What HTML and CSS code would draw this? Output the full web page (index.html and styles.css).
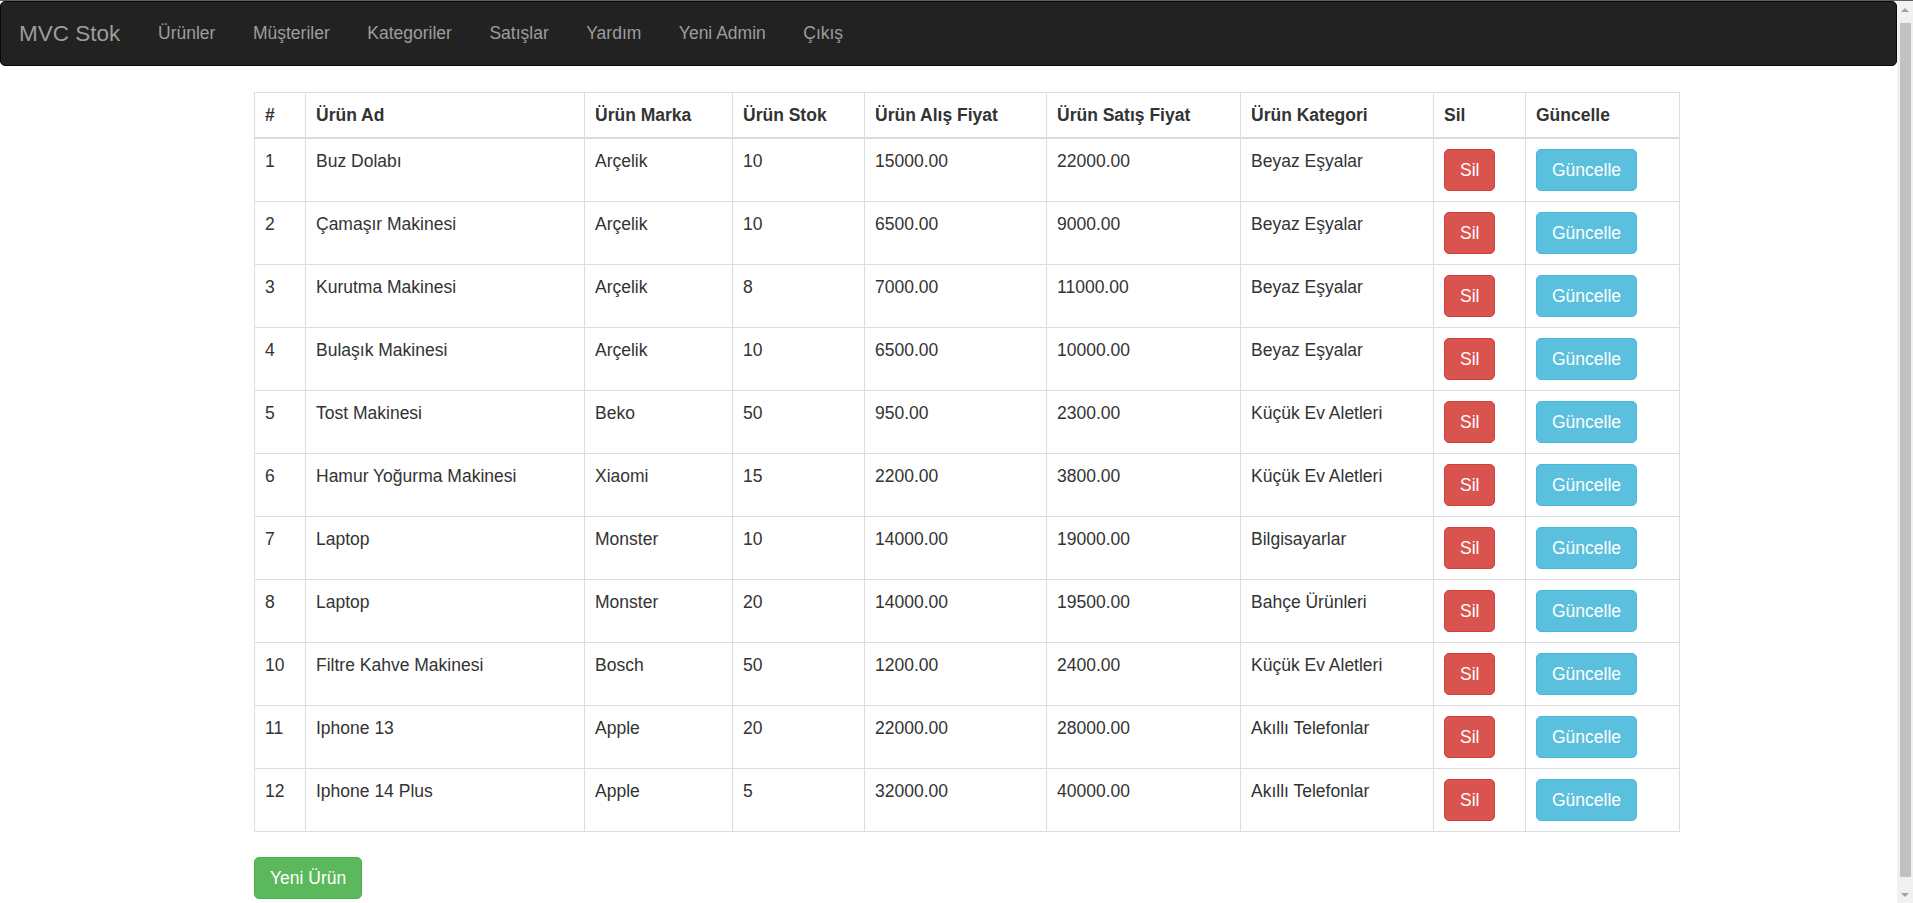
FILE: index.html
```html
<!DOCTYPE html>
<html lang="tr">
<head>
<meta charset="utf-8">
<title>MVC Stok - Ürünler</title>
<link rel="stylesheet" href="styles.css">
</head>
<body>
<div class="topline"></div>
<div class="window">
  <div class="page">
    <nav class="navbar">
      <a class="brand" href="#">MVC Stok</a>
      <ul class="nav">
        <li><a href="#">Ürünler</a></li>
        <li><a href="#">Müşteriler</a></li>
        <li><a href="#">Kategoriler</a></li>
        <li><a href="#">Satışlar</a></li>
        <li><a href="#">Yardım</a></li>
        <li><a href="#">Yeni Admin</a></li>
        <li><a href="#">Çıkış</a></li>
      </ul>
    </nav>
    <main class="content">
      <table class="grid">
        <colgroup>
          <col class="c1"><col class="c2"><col class="c3"><col class="c4"><col class="c5"><col class="c6"><col class="c7"><col class="c8"><col class="c9">
        </colgroup>
        <thead>
          <tr><th>#</th><th>Ürün Ad</th><th>Ürün Marka</th><th>Ürün Stok</th><th>Ürün Alış Fiyat</th><th>Ürün Satış Fiyat</th><th>Ürün Kategori</th><th>Sil</th><th>Güncelle</th></tr>
        </thead>
        <tbody>
          <tr><td>1</td><td>Buz Dolabı</td><td>Arçelik</td><td>10</td><td>15000.00</td><td>22000.00</td><td>Beyaz Eşyalar</td><td><a class="btn danger" href="#">Sil</a></td><td><a class="btn info" href="#">Güncelle</a></td></tr>
          <tr><td>2</td><td>Çamaşır Makinesi</td><td>Arçelik</td><td>10</td><td>6500.00</td><td>9000.00</td><td>Beyaz Eşyalar</td><td><a class="btn danger" href="#">Sil</a></td><td><a class="btn info" href="#">Güncelle</a></td></tr>
          <tr><td>3</td><td>Kurutma Makinesi</td><td>Arçelik</td><td>8</td><td>7000.00</td><td>11000.00</td><td>Beyaz Eşyalar</td><td><a class="btn danger" href="#">Sil</a></td><td><a class="btn info" href="#">Güncelle</a></td></tr>
          <tr><td>4</td><td>Bulaşık Makinesi</td><td>Arçelik</td><td>10</td><td>6500.00</td><td>10000.00</td><td>Beyaz Eşyalar</td><td><a class="btn danger" href="#">Sil</a></td><td><a class="btn info" href="#">Güncelle</a></td></tr>
          <tr><td>5</td><td>Tost Makinesi</td><td>Beko</td><td>50</td><td>950.00</td><td>2300.00</td><td>Küçük Ev Aletleri</td><td><a class="btn danger" href="#">Sil</a></td><td><a class="btn info" href="#">Güncelle</a></td></tr>
          <tr><td>6</td><td>Hamur Yoğurma Makinesi</td><td>Xiaomi</td><td>15</td><td>2200.00</td><td>3800.00</td><td>Küçük Ev Aletleri</td><td><a class="btn danger" href="#">Sil</a></td><td><a class="btn info" href="#">Güncelle</a></td></tr>
          <tr><td>7</td><td>Laptop</td><td>Monster</td><td>10</td><td>14000.00</td><td>19000.00</td><td>Bilgisayarlar</td><td><a class="btn danger" href="#">Sil</a></td><td><a class="btn info" href="#">Güncelle</a></td></tr>
          <tr><td>8</td><td>Laptop</td><td>Monster</td><td>20</td><td>14000.00</td><td>19500.00</td><td>Bahçe Ürünleri</td><td><a class="btn danger" href="#">Sil</a></td><td><a class="btn info" href="#">Güncelle</a></td></tr>
          <tr><td>10</td><td>Filtre Kahve Makinesi</td><td>Bosch</td><td>50</td><td>1200.00</td><td>2400.00</td><td>Küçük Ev Aletleri</td><td><a class="btn danger" href="#">Sil</a></td><td><a class="btn info" href="#">Güncelle</a></td></tr>
          <tr><td>11</td><td>Iphone 13</td><td>Apple</td><td>20</td><td>22000.00</td><td>28000.00</td><td>Akıllı Telefonlar</td><td><a class="btn danger" href="#">Sil</a></td><td><a class="btn info" href="#">Güncelle</a></td></tr>
          <tr><td>12</td><td>Iphone 14 Plus</td><td>Apple</td><td>5</td><td>32000.00</td><td>40000.00</td><td>Akıllı Telefonlar</td><td><a class="btn danger" href="#">Sil</a></td><td><a class="btn info" href="#">Güncelle</a></td></tr>
        </tbody>
      </table>
      <a class="btn success" href="#">Yeni Ürün</a>
    </main>
  </div>
  <div class="scrollbar">
    <div class="sb-btn"><span class="arrow up"></span></div>
    <div class="sb-track"><div class="sb-thumb"></div></div>
    <div class="sb-btn"><span class="arrow down"></span></div>
  </div>
</div>
</body>
</html>
```

FILE: styles.css
```css
html, body {
  margin: 0;
  padding: 0;
  height: 100%;
  overflow: hidden;
  background: #fff;
}

body {
  font-family: "Liberation Sans", Arial, Helvetica, sans-serif;
  font-size: 17.5px;
  line-height: 25px;
  color: #333;
  display: flex;
  flex-direction: column;
}

.topline {
  height: 1px;
  background: #5f5f5f;
  flex: none;
}

.window {
  flex: 1;
  display: flex;
  min-height: 0;
}

.page {
  flex: 1;
  min-width: 0;
}

/* Navbar */
.navbar {
  display: flex;
  align-items: flex-start;
  background: #222;
  border: 1px solid #080808;
  border-radius: 5px;
  height: 63px;
  margin-bottom: 26px;
}

.brand {
  display: block;
  padding: 19px 19px 19px 18px;
  font-size: 22.5px;
  line-height: 25px;
  color: #9d9d9d;
  text-decoration: none;
}

.nav {
  display: flex;
  list-style: none;
  margin: 0;
  padding: 0;
}

.nav a {
  display: block;
  padding: 19px 18.75px;
  line-height: 25px;
  color: #9d9d9d;
  text-decoration: none;
}

/* Content */
.content {
  margin-left: 254px;
  width: 1425px;
}

.grid {
  width: 1425px;
  table-layout: fixed;
  border-collapse: collapse;
  border-spacing: 0;
  margin-bottom: 25px;
}

.c1 { width: 51px; }
.c2 { width: 279px; }
.c3 { width: 148px; }
.c4 { width: 132px; }
.c5 { width: 182px; }
.c6 { width: 194px; }
.c7 { width: 193px; }
.c8 { width: 92px; }
.c9 { width: 154px; }

.grid th,
.grid td {
  border: 1px solid #ddd;
  padding: 10px;
  text-align: left;
  vertical-align: top;
  line-height: 25px;
}

.grid th {
  font-weight: bold;
  padding-top: 10px;
  padding-bottom: 9px;
  border-bottom-width: 2px;
  vertical-align: bottom;
}

.grid td {
  padding-top: 10px;
  padding-bottom: 10px;
  height: 42px;
}

/* Buttons */
.btn {
  display: inline-block;
  padding: 7.5px 15px;
  font-size: 17.5px;
  line-height: 25px;
  color: #fff;
  text-decoration: none;
  border: 1px solid transparent;
  border-radius: 5px;
  white-space: nowrap;
  vertical-align: top;
}

.danger {
  background: #d9534f;
  border-color: #d43f3a;
}

.info {
  background: #5bc0de;
  border-color: #46b8da;
}

.success {
  background: #5cb85c;
  border-color: #4cae4c;
}

/* Fake scrollbar */
.scrollbar {
  width: 16px;
  flex: none;
  background: #f1f1f1;
  display: flex;
  flex-direction: column;
}

.sb-btn {
  height: 17px;
  flex: none;
  display: flex;
  align-items: center;
  justify-content: center;
}

.arrow {
  width: 0;
  height: 0;
  border-left: 4px solid transparent;
  border-right: 4px solid transparent;
}

.arrow.up {
  border-bottom: 4px solid #a3a3a3;
}

.arrow.down {
  border-top: 4px solid #a3a3a3;
}

.sb-track {
  flex: 1;
  padding: 5px 2px 9px 3px;
  display: flex;
  flex-direction: column;
}

.sb-thumb {
  flex: 1;
  background: #c1c1c1;
}
```
